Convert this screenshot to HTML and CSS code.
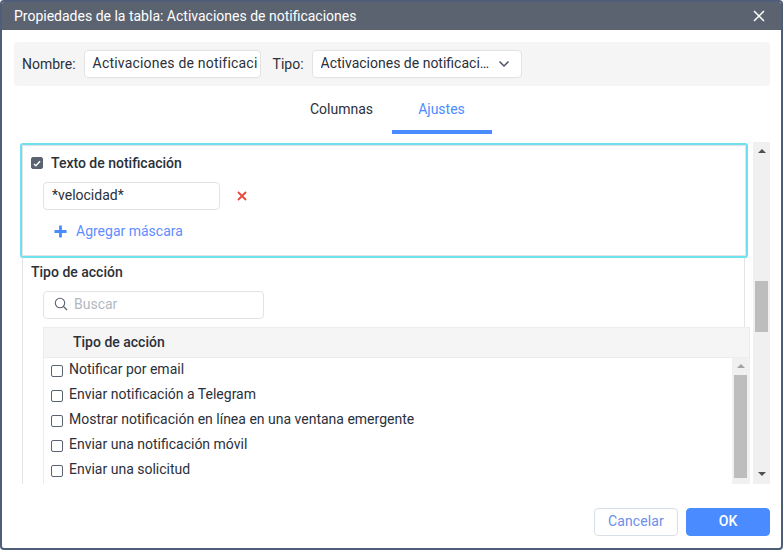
FILE: index.html
```html
<!DOCTYPE html>
<html lang="es">
<head>
<meta charset="utf-8">
<title>Propiedades de la tabla</title>
<link rel="stylesheet" href="styles.css">
</head>
<body>
<div class="dialog">
  <header class="titlebar">
    <span class="title">Propiedades de la tabla: Activaciones de notificaciones</span>
    <svg class="close" width="12" height="12" viewBox="0 0 12 12"><path d="M1 1l10 10M11 1L1 11" stroke="#fff" stroke-width="1.5" fill="none"/></svg>
  </header>
  <div class="namebar">
    <span class="label">Nombre:</span>
    <div class="field name-field">Activaciones de notificaci</div>
    <span class="label tipo-label">Tipo:</span>
    <div class="field type-field">
      <span class="ellipsis">Activaciones de notificaciones</span>
      <svg class="chev" width="12" height="8" viewBox="0 0 12 8"><path d="M1.5 1.5L6 6l4.500-4.500" stroke="#4a5160" stroke-width="1.500" fill="none"/></svg>
    </div>
  </div>
  <nav class="tabs">
    <div class="tab">Columnas</div>
    <div class="tab active">Ajustes</div>
  </nav>
  <div class="scroller">
    <div class="scroll-content">
      <section class="hl">
        <div class="check-row">
          <span class="cb checked"><svg width="8" height="7" viewBox="0 0 9 8"><path d="M1 4.500l2.200 2L8 1.500" stroke="#fff" stroke-width="1.700" fill="none"/></svg></span>
          <span class="strong">Texto de notificación</span>
        </div>
        <div class="mask-row">
          <div class="field mask-field">*velocidad*</div>
          <svg class="del" width="10" height="10" viewBox="0 0 10 10"><path d="M1 1l8 8M9 1L1 9" stroke="#e8483a" stroke-width="1.800" fill="none"/></svg>
        </div>
        <div class="add-row">
          <svg width="13" height="13" viewBox="0 0 14 14"><path d="M7 0.500v13M0.500 7h13" stroke="#4a8cff" stroke-width="3" fill="none"/></svg>
          <span class="add-text">Agregar máscara</span>
        </div>
      </section>
      <section class="plain">
        <div class="strong plain-title">Tipo de acción</div>
        <div class="field search-field">
          <svg width="14" height="14" viewBox="0 0 14 14"><circle cx="6" cy="6" r="4.700" stroke="#5b6370" stroke-width="1.100" fill="none"/><path d="M9.500 9.500L13 13" stroke="#5b6370" stroke-width="1.200" fill="none"/></svg>
          <span class="placeholder">Buscar</span>
        </div>
        <div class="table">
          <div class="thead"><span class="strong">Tipo de acción</span></div>
          <div class="tbody">
            <div class="rows">
              <div class="row"><span class="cb"></span><span>Notificar por email</span></div>
              <div class="row"><span class="cb"></span><span>Enviar notificación a Telegram</span></div>
              <div class="row"><span class="cb"></span><span>Mostrar notificación en línea en una ventana emergente</span></div>
              <div class="row"><span class="cb"></span><span>Enviar una notificación móvil</span></div>
              <div class="row"><span class="cb"></span><span>Enviar una solicitud</span></div>
            </div>
            <div class="vbar inner">
              <span class="arrow up light"></span>
              <span class="thumb inner-thumb"></span>
            </div>
          </div>
        </div>
      </section>
    </div>
    <div class="vbar outer">
      <span class="arrow up"></span>
      <span class="thumb outer-thumb"></span>
      <span class="arrow down"></span>
    </div>
  </div>
  <footer class="footer">
    <button class="btn cancel">Cancelar</button>
    <button class="btn ok">OK</button>
  </footer>
</div>
</body>
</html>
```
FILE: styles.css
```css
* { box-sizing: border-box; }
html, body { margin: 0; padding: 0; background: #fff; }
body { width: 783px; height: 550px; overflow: hidden; font: 14px/20px Roboto, sans-serif; color: #2b303a; }
.dialog { width: 783px; height: 550px; border: 2px solid #4f5d78; border-radius: 4px; display: flex; flex-direction: column; overflow: hidden; background: #fff; }
.titlebar { flex: none; margin-top: -1px; padding: 1px 12px 0; height: 29px; background: #5b6370; color: #fff; display: flex; align-items: center; justify-content: space-between; }
.title { font-size: 14px; }
.close { margin-right: 4px; }
.namebar { flex: none; margin: 12px 11px 0 12px; height: 44px; background: #f5f5f5; border-radius: 4px; display: flex; align-items: center; padding: 0 8px; }
.label { margin-right: 8px; }
.tipo-label { margin-left: 12px; }
.field { background: #fff; border: 1px solid #e3e3e3; border-radius: 4px; height: 28px; display: flex; align-items: center; padding: 0 8px 2px; white-space: nowrap; overflow: hidden; }
.name-field { width: 177px; letter-spacing: 0.2px; }
.type-field { width: 210px; padding-bottom: 0; }
.ellipsis { width: 171px; overflow: hidden; text-overflow: ellipsis; padding-bottom: 2px; }
.chev { margin-left: 6px; flex: none; }
.tabs { flex: none; height: 44px; margin-top: 4px; display: flex; justify-content: center; }
.tab { width: 100px; height: 44px; text-align: center; padding-top: 9px; }
.tab.active { color: #4a8cff; border-bottom: 4px solid #4a8cff; }
.scroller { flex: none; height: 342px; margin: 8px 11px 0 12px; position: relative; display: flex; overflow: hidden; }
.scroll-content { width: 739px; flex: none; padding-left: 6px; }
.hl { width: 728px; height: 115px; margin-top: 1px; border: 2px solid #6fe0ee; border-radius: 3px; padding: 0 0 0 9px; outline: 1px solid #e3e3e3; outline-offset: -3px; }
.check-row { display: flex; align-items: center; height: 20px; margin-top: 8px; }
.cb { width: 12px; height: 12px; border: 1px solid #5b6370; border-radius: 2px; background: #fff; display: inline-flex; align-items: center; justify-content: center; flex: none; }
.cb.checked { background: #5b6370; margin-right: 8px; }
.strong { font-weight: 500; }
.mask-row { display: flex; align-items: center; margin: 9px 0 0 12px; }
.mask-field { width: 177px; }
.del { margin-left: 17px; }
.add-row { display: flex; align-items: center; margin: 11px 0 0 23px; height: 20px; }
.add-text { color: #5f8dff; margin-left: 9px; }
.plain { margin-left: 2px; width: 723px; height: 228px; border-left: 1px solid #e5e5e5; border-right: 1px solid #e5e5e5; padding-left: 8px; position: relative; }
.plain-title { padding-top: 4px; line-height: 20px; height: 24px; }
.search-field { width: 221px; margin: 9px 0 0 12px; gap: 6px; padding-left: 10px; }
.placeholder { color: #b4b8bf; }
.table { position: absolute; left: 20px; top: 69px; width: 707px; height: 160px; }
.thead { height: 31px; background: #f5f5f5; border: 1px solid #ececec; padding: 4px 0 0 29px; }
.tbody { display: flex; height: 126px; border-left: 1px solid #ececec; overflow: hidden; }
.rows { width: 688px; flex: none; }
.row { display: flex; height: 25px; align-items: flex-start; padding-left: 7px; }
.row .cb { margin: 7px 6px 0 0; }
.row span:last-child { line-height: 22px; }
.vbar { background: #f0f0f0; position: relative; flex: none; }
.inner { width: 18px; height: 126px; }
.outer { width: 17px; height: 342px; position: absolute; right: 0; top: 0; }
.thumb { position: absolute; background: #bdbdbd; }
.inner-thumb { left: 2px; top: 17px; width: 13px; height: 103px; }
.outer-thumb { left: 2px; top: 139px; width: 13px; height: 51px; }
.arrow { position: absolute; left: 50%; margin-left: -4px; width: 0; height: 0; border-left: 4px solid transparent; border-right: 4px solid transparent; }
.arrow.up { top: 7px; border-bottom: 4px solid #505050; }
.arrow.down { bottom: 8px; border-top: 4px solid #505050; }
.arrow.up.light { border-bottom-color: #a3a3a3; top: 6px; }
.footer { flex: 1; display: flex; justify-content: flex-end; align-items: flex-start; gap: 8px; padding: 24px 11px 0 0; }
.btn { height: 28px; border-radius: 4px; font: 500 14px Roboto, sans-serif; border: 1px solid #d9dfe8; background: #fff; padding: 0 0 2px; }
.cancel { width: 84px; color: #6a90e8; font-weight: 400; letter-spacing: 0.1px; }
.ok { width: 84px; background: #4a8cff; border-color: #4a8cff; color: #fff; }
```
